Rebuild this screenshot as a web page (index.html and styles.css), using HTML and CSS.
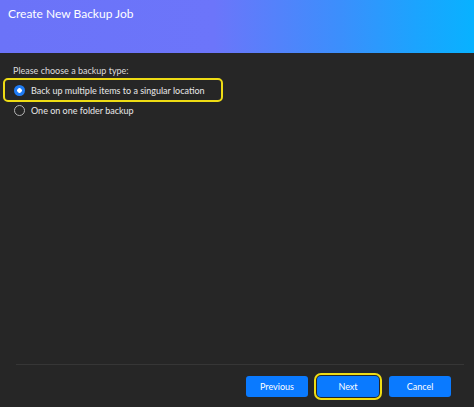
FILE: index.html
```html
<!DOCTYPE html>
<html lang="en">
<head>
<meta charset="utf-8">
<title>Create New Backup Job</title>
<link rel="stylesheet" href="styles.css">
</head>
<body>
<div class="dialog">
  <header class="header">
    <h1 class="title">Create New Backup Job</h1>
  </header>
  <main class="content">
    <p class="prompt">Please choose a backup type:</p>
    <div class="options">
      <label class="option focused">
        <span class="radio checked"></span>
        <span class="option-text">Back up multiple items to a singular location</span>
      </label>
      <label class="option">
        <span class="radio"></span>
        <span class="option-text">One on one folder backup</span>
      </label>
    </div>
  </main>
  <footer class="footer">
    <div class="separator"></div>
    <div class="buttons">
      <button class="btn">Previous</button>
      <button class="btn focus">Next</button>
      <button class="btn">Cancel</button>
    </div>
  </footer>
</div>
</body>
</html>
```
FILE: styles.css
```css
html, body {
  margin: 0;
  padding: 0;
  background: #262626;
}
body {
  font-family: Lato, "Noto Sans", Arial, sans-serif;
  color: #e6e6e6;
}
.dialog {
  display: flex;
  flex-direction: column;
  height: 100vh;
  width: 100%;
}
.header {
  height: 53px;
  box-sizing: border-box;
  padding: 5px 0 0 8px;
  background: linear-gradient(to right, #6b73f8 0%, #6c75fa 45%, #3b8ffc 72%, #1ba4fe 88%, #08b2ff 100%);
}
.title {
  margin: 0;
  font-size: 12px;
  font-weight: 400;
  line-height: 18px;
  color: #ffffff;
  white-space: nowrap;
}
.content {
  flex: 1;
  display: flex;
  flex-direction: column;
}
.prompt {
  margin: 11px 0 0 13px;
  font-size: 9px;
  line-height: 14px;
  color: #dcdcdc;
  white-space: nowrap;
}
.options {
  display: flex;
  flex-direction: column;
}
.option {
  margin-left: 3px;
  width: 220px;
  height: 16px;
  box-sizing: border-box;
  border: 2px solid transparent;
  border-radius: 5px;
  display: flex;
  align-items: center;
  gap: 6px;
  padding-left: 9px;
  font-size: 9px;
  color: #e8e8e8;
  white-space: nowrap;
}
.option.focused {
  height: 24px;
  border-color: #eedc14;
}
.radio {
  width: 11px;
  height: 11px;
  box-sizing: border-box;
  border-radius: 50%;
  border: 1.5px solid #b4b4b4;
  flex: none;
}
.radio.checked {
  border: none;
  background: radial-gradient(circle, #ffffff 0, #ffffff 2px, #1f7cf4 2.6px);
}
.footer {
  display: flex;
  flex-direction: column;
}
.separator {
  height: 1px;
  background: #363636;
  margin: 0 10px 0 16px;
}
.buttons {
  display: flex;
  justify-content: flex-end;
  gap: 9px;
  padding: 11px 23px 10px 0;
}
.btn {
  width: 62px;
  height: 21px;
  border: none;
  border-radius: 3px;
  background: #0a7aff;
  color: #ffffff;
  font-family: Lato, "Noto Sans", Arial, sans-serif;
  font-size: 9px;
  padding: 0;
}
.btn.focus {
  outline: 2px solid #eedc14;
  outline-offset: 1px;
  border-radius: 4px;
  margin-right: 1px;
}
```
